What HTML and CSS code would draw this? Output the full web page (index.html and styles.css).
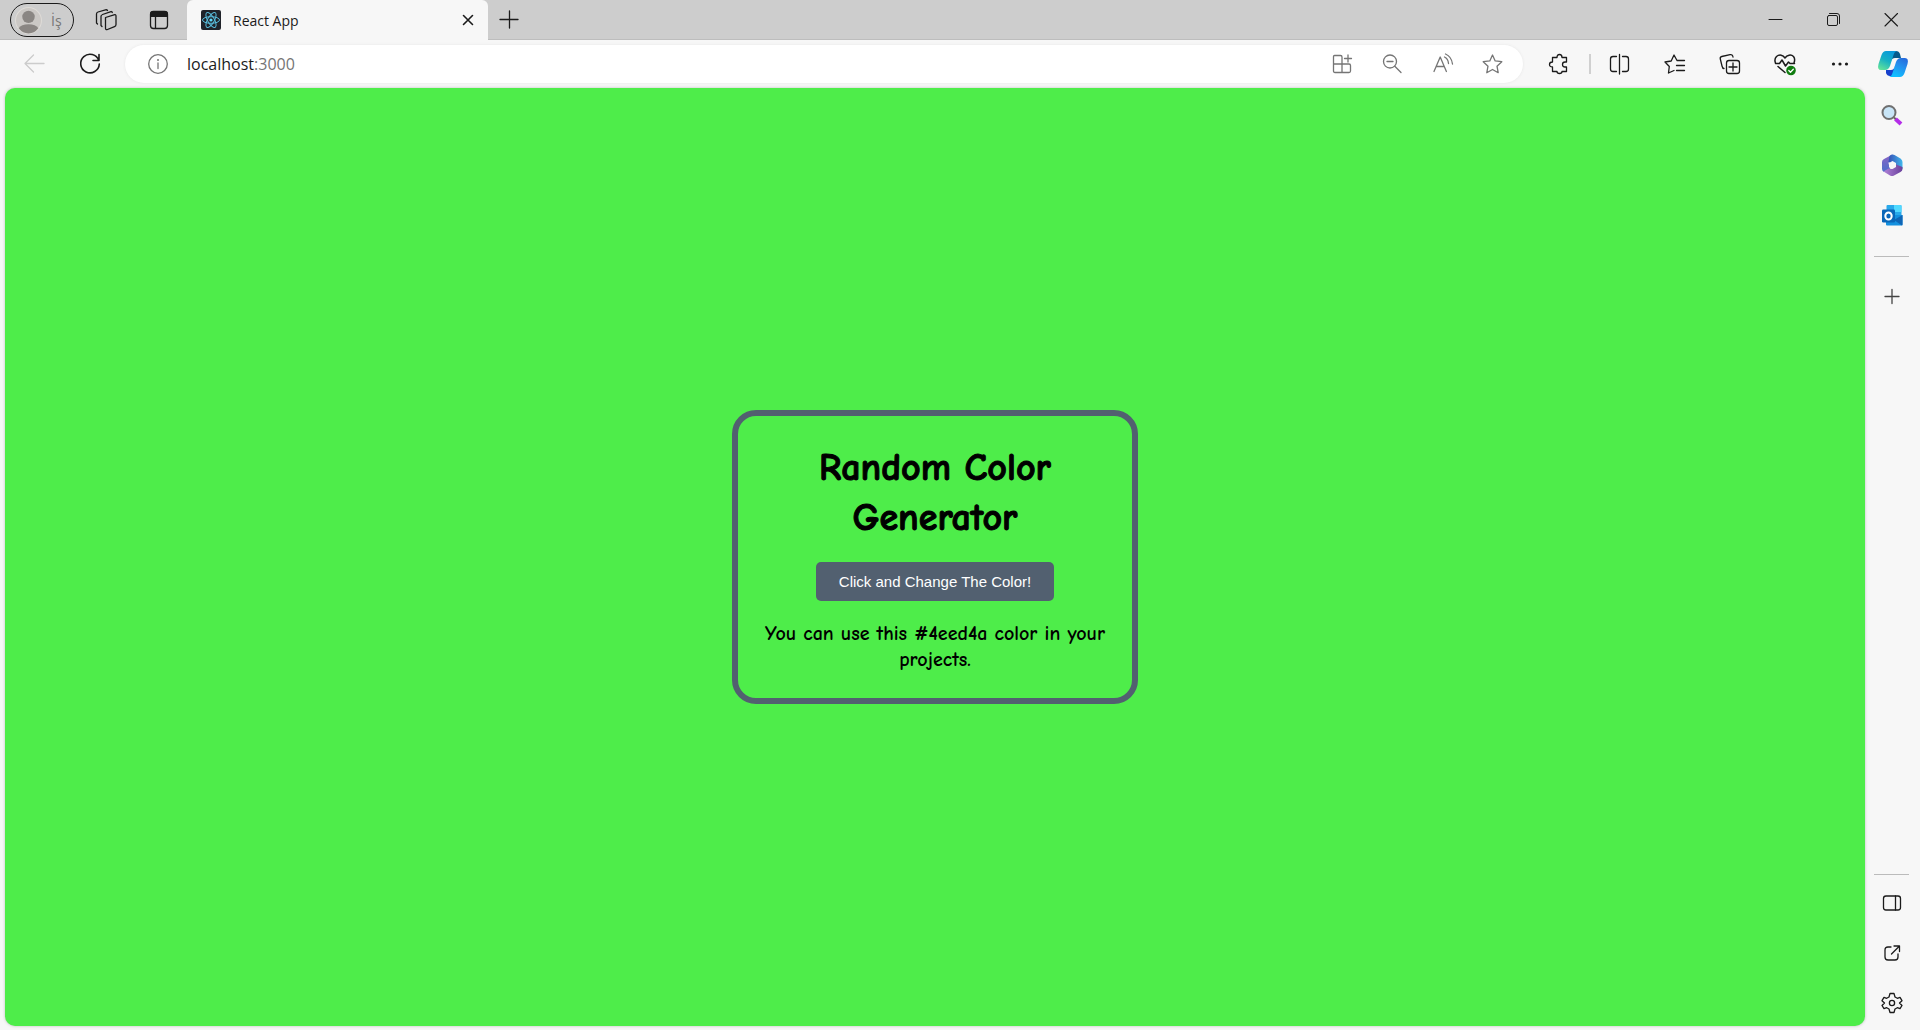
FILE: index.html
```html
<!DOCTYPE html>
<html lang="en">
<head>
<meta charset="utf-8">
<title>React App</title>
<link rel="stylesheet" href="styles.css">
</head>
<body>
<div class="browser">
  <header class="tabbar">
    <button class="profile" type="button">
      <svg class="avatar" viewBox="0 0 26 26"><circle cx="13" cy="13" r="12.500" fill="#cbc8c5" stroke="#dedbd7"/><circle cx="13" cy="9.500" r="6" fill="#8a8683"/><path d="M3.500 20.500Q6 16.500 13 16.500T22.500 20.500Q18.500 25.500 13 25.500T3.500 20.500Z" fill="#8a8683"/></svg>
      <span>İş</span>
    </button>
    <button class="tool tab-tool" type="button" aria-label="Workspaces"><svg viewBox="0 0 24 24"><path d="M11.500 9.500L20 6.800Q22 6.200 22 8V16.500Q22 18 20.500 18.600L13.500 21.500Q11.500 22.200 11.500 20.300ZM8 18.500L7 17.500V8.500Q7 7 8.500 6.500L17 3.500M3.500 16L2.500 15V6Q2.500 4.500 4 4L11.500 1.800M8.500 6.500L17 3.700Q18 3.500 18.300 4.500M11.500 1.800Q13 1.500 13.500 2.500"/></svg></button>
    <button class="tool tab-tool" type="button" aria-label="Tab actions"><svg viewBox="0 0 24 24"><rect x="3.500" y="3.500" width="17" height="17" rx="3"/><path d="M3 9V6Q3 3 6 3H18Q21 3 21 6V9Z" fill="currentColor" stroke="none"/><path d="M8.500 8V20"/></svg></button>
    <div class="tab">
      <svg class="favicon" viewBox="0 0 20 20"><rect width="20" height="20" rx="2" fill="#20232a"/><g fill="none" stroke="#58bddd" stroke-width="1"><ellipse cx="10" cy="10" rx="8.500" ry="3.300"/><ellipse cx="10" cy="10" rx="8.500" ry="3.300" transform="rotate(60 10 10)"/><ellipse cx="10" cy="10" rx="8.500" ry="3.300" transform="rotate(120 10 10)"/></g><circle cx="10" cy="10" r="1.600" fill="#61dafb"/></svg>
      <span class="tab-title">React App</span>
      <button class="tool close-tab" type="button" aria-label="Close tab"><svg viewBox="0 0 24 24"><path d="M7.500 7.500L16.500 16.500M16.500 7.500L7.500 16.500" stroke-width="1.600"/></svg></button>
    </div>
    <button class="tool new-tab" type="button" aria-label="New tab"><svg viewBox="0 0 24 24"><path d="M3 11.500H21M12.500 3V20"/></svg></button>
    <div class="window-controls">
      <button class="tool" type="button" aria-label="Minimize"><svg viewBox="0 0 24 24"><path d="M6 11.500H19" stroke-width="1"/></svg></button>
      <button class="tool" type="button" aria-label="Restore"><svg viewBox="0 0 24 24"><rect x="6.500" y="7.500" width="10" height="10" rx="1.500" stroke-width="1"/><path d="M8.500 5.500H16Q18.500 5.500 18.500 8V15.500" stroke-width="1"/></svg></button>
      <button class="tool" type="button" aria-label="Close"><svg viewBox="0 0 24 24"><path d="M6 5.500L18.500 18M18.500 5.500L6 18" stroke-width="1.100"/></svg></button>
    </div>
  </header>

  <div class="toolbar">
    <button class="tool nav back" type="button" aria-label="Back" disabled><svg viewBox="0 0 24 24"><path d="M21 11.500H2M10.500 3L2 11.500L10.500 20" /></svg></button>
    <button class="tool nav" type="button" aria-label="Refresh"><svg viewBox="0 0 24 24"><path d="M20.800 8.500A9.300 9.300 0 1 0 21.300 12M21 2.500V8.500H15" stroke-width="1.600"/></svg></button>
    <div class="address">
      <button class="tool info" type="button" aria-label="Site information"><svg viewBox="0 0 24 24"><circle cx="12" cy="12" r="9.300"/><path d="M12 11V16.500"/><circle cx="12" cy="8" r="1" fill="currentColor" stroke="none"/></svg></button>
      <label class="url" for="url">localhost<span class="port">:3000</span></label>
      <input id="url" class="url-input" type="text">
      <button class="tool" type="button" aria-label="Apps"><svg viewBox="0 0 24 24"><path d="M4.500 3.500H10.500Q12 3.500 12 5V12H3.500V4.500Q3.500 3.500 4.500 3.500ZM3.500 12H19Q20.500 12 20.500 13.500V19Q20.500 20.500 19 20.500H5Q3.500 20.500 3.500 19ZM12 12V20.500M18 3V10M14.500 6.500H21.500"/></svg></button>
      <button class="tool" type="button" aria-label="Zoom"><svg viewBox="0 0 24 24"><circle cx="10" cy="9.500" r="6.500"/><path d="M14.800 14.300L21 20.500M7 9.500H13"/></svg></button>
      <button class="tool" type="button" aria-label="Read aloud"><svg viewBox="0 0 24 24"><path d="M4 19.500L10.200 5L16.400 19.500M6.300 14.500H14.200M14.500 5Q18 6.500 18.500 11.500M15.500 2Q21.500 4.500 22.500 12"/></svg></button>
      <button class="tool" type="button" aria-label="Favorite"><svg viewBox="0 0 24 24"><path d="M12.500 3L15.200 8.900L21.800 9.700L17 14.200L18.200 20.700L12.500 17.500L6.800 20.700L8 14.200L3.200 9.700L9.800 8.900Z"/></svg></button>
    </div>
    <button class="tool extensions" type="button" aria-label="Extensions"><svg viewBox="0 0 24 24"><path d="M5.500 5.500H10Q10 2.500 12.500 2.500T15 5.500H19.500V10H18Q15.500 10 15.500 12.500T18 15H19.500V19.500H15Q15 21.500 12.500 21.500T10 19.500H5.500V15Q2.500 15 2.500 12.500T5.500 10Z"/></svg></button>
    <span class="divider"></span>
    <button class="tool action" type="button" aria-label="Split screen"><svg viewBox="0 0 24 24"><path d="M9.500 4.500H6Q3.500 4.500 3.500 7V17Q3.500 19.500 6 19.500H9.500M15.500 4.500H19Q21.500 4.500 21.500 7V17Q21.500 19.500 19 19.500H15.500M12.500 2.500V22"/></svg></button>
    <button class="tool action" type="button" aria-label="Favorites"><svg viewBox="0 0 24 24"><path d="M15 8.500L12 3L9.200 9L3 10L7.300 14.500L6.500 21L12 18.500M15 8.500H22.500M14.500 13.500H22.500M14.500 18.500H22.500"/></svg></button>
    <button class="tool action" type="button" aria-label="Collections"><svg viewBox="0 0 24 24"><rect x="9.500" y="8.500" width="13" height="13" rx="2.500"/><path d="M16 11V19M12 15H20M7 16.500Q5.500 16.500 5 14L3.300 7Q2.800 5 4.800 4.500L13 2.700Q15.500 2.200 16 5"/></svg></button>
    <button class="tool action" type="button" aria-label="Browser essentials"><svg viewBox="0 0 24 24"><path d="M3.500 11Q2 7 4.500 4.500C7.500 2 11 3 13 6C15 3 19 2 21.500 4.500Q23.500 7 22 11M3.500 11.500H7.500L10 8L13.500 14L16.500 10L18 11.500H22.500M6 14.500L13 20.500" stroke-width="1.500"/><circle cx="19" cy="18.500" r="4.800" fill="#107c10" stroke="none"/><path d="M16.800 18.500L18.500 20.200L21.300 17.200" stroke="#fff"/></svg></button>
    <button class="tool action" type="button" aria-label="Settings and more"><svg viewBox="0 0 24 24"><g fill="currentColor" stroke="none"><circle cx="6.500" cy="12" r="1.600"/><circle cx="13" cy="12" r="1.600"/><circle cx="19.500" cy="12" r="1.600"/></g></svg></button>
    <button class="tool copilot" type="button" aria-label="Copilot"><svg viewBox="0 0 32 32"><defs><linearGradient id="cl" x1="0.700" y1="0" x2="0.200" y2="1"><stop offset="0" stop-color="#0898dc"/><stop offset="0.500" stop-color="#17b1c4"/><stop offset="1" stop-color="#61e29a"/></linearGradient><linearGradient id="cr" x1="1" y1="0" x2="0.500" y2="1"><stop offset="0" stop-color="#2764d8"/><stop offset="0.500" stop-color="#2490ee"/><stop offset="1" stop-color="#10bdff"/></linearGradient></defs><g stroke="none"><path d="M16 3H19Q22 3 23 6L24 10H18Q15 10 14 13Z" fill="#075b8c"/><path d="M9 22H14Q17 22 18 18L16 28H13Q10 28 9 25Z" fill="#1740cc"/><path d="M9 3H20Q17.500 3.500 16.500 7L13 18Q11.500 22 8 22H4Q0 22 1.500 16L4.500 7Q6 3 9 3Z" fill="url(#cl)"/><path d="M23 29H12Q14.500 28.500 15.500 25L19 14Q20.500 10 24 10H28Q32 10 30.500 16L27.500 25Q26 29 23 29Z" fill="url(#cr)"/></g></svg></button>
  </div>

  <div class="body">
    <main class="page">
      <section class="card">
        <h1>Random Color Generator</h1>
        <button class="change" type="button">Click and Change The Color!</button>
        <p>You can use this #4eed4a color in your projects.</p>
      </section>
    </main>
    <aside class="sidebar">
      <button class="tool" type="button" aria-label="Search"><svg viewBox="0 0 24 24"><path d="M14.500 15L16.500 17" stroke="#666" stroke-width="2"/><path d="M15.500 16L21 21" stroke="#b42de8" stroke-width="4" stroke-linecap="butt"/><circle cx="9" cy="9.500" r="6.500" fill="#c8e5f7" stroke="#707070" stroke-width="2"/></svg></button>
      <button class="tool" type="button" aria-label="Microsoft 365"><svg viewBox="0 0 24 24"><defs><linearGradient id="ma" x1="0" y1="0" x2="0" y2="1"><stop offset="0" stop-color="#8a63c4"/><stop offset="1" stop-color="#4b6fcb"/></linearGradient><linearGradient id="mb"><stop offset="0" stop-color="#3650b5"/><stop offset="1" stop-color="#41b7ed"/></linearGradient><linearGradient id="mc"><stop offset="0" stop-color="#b083d8"/><stop offset="1" stop-color="#69409b"/></linearGradient></defs><g stroke="none"><path d="M12.500 1.500L4 6Q2 7 2 9V16Q2 18 4 19L10 16L8.500 10Z" fill="url(#ma)"/><path d="M9.500 3Q12 0.800 14.500 2L20.500 5.500Q22.500 7 22.500 9V16L15 12L8.500 9Z" fill="url(#mb)"/><path d="M3.500 18.500L8.500 15.500L12 16L16 11.500L22.500 14V16Q22.500 18 20.500 19L14 22.500Q12 23.500 10 22.500Z" fill="url(#mc)"/><path d="M12.500 8L16 10V14L12.500 16L9 14V10Z" fill="#f7f7f7"/></g></svg></button>
      <button class="tool" type="button" aria-label="Outlook"><svg viewBox="0 0 24 24"><g stroke="none"><rect x="6.500" y="2" width="15" height="17" rx="1" fill="#28a8ea"/><path d="M14 2H20.500Q21.500 2 21.500 3V9H14Z" fill="#50d9ff"/><path d="M7 9H14V14H7Z" fill="#0364b8"/><path d="M6 12H22.500V21.500Q22.500 22.500 21.500 22.500H7Q6 22.500 6 21.500Z" fill="#1490df"/><path d="M22.500 12L14 17L22 22.500Q22.500 22 22.500 21.500Z" fill="#0f65b5"/><rect x="2" y="6.500" width="13" height="13" rx="1.200" fill="#0a67b9"/></g><ellipse cx="8.500" cy="13" rx="3.200" ry="3.500" stroke="#fff" stroke-width="2"/></svg></button>
      <hr>
      <button class="tool" type="button" aria-label="Customize"><svg viewBox="0 0 24 24"><path d="M5 11.500H19M12 4.500V18.500" stroke="#444"/></svg></button>
      <div class="sidebar-end">
        <hr>
        <button class="tool" type="button" aria-label="Hide sidebar"><svg viewBox="0 0 24 24"><rect x="3.500" y="5" width="17" height="14" rx="2.500"/><path d="M15.500 5V19"/></svg></button>
        <button class="tool" type="button" aria-label="Open in window"><svg viewBox="0 0 24 24"><path d="M11 6H8Q5 6 5 9V16Q5 19 8 19H15Q18 19 18 16V13M14 5H19.500V10.500M19.500 5L11.500 13"/></svg></button>
        <button class="tool" type="button" aria-label="Settings"><svg viewBox="0 0 24 24"><path d="M10 2.500H14L15 6L17.300 7.300L20 6.300L22 9.700L19.500 12L22 14.500L20 17.700L17.300 16.700L15 18L14 21.500H10L9 18L6.700 16.700L4 17.700L2 14.500L4.500 12L2 9.700L4 6.300L6.700 7.300L9 6Z"/><circle cx="12" cy="12" r="2.600"/></svg></button>
      </div>
    </aside>
  </div>
</div>
</body>
</html>
```
FILE: styles.css
```css
* { box-sizing: border-box; }

body {
  margin: 0;
  background: #f7f7f7;
  color: #1b1b1b;
  font-family: "Segoe UI", "Open Sans", sans-serif;
}

button {
  border: 0;
  padding: 0;
  background: none;
  color: inherit;
  font: inherit;
}

.browser {
  display: flex;
  flex-direction: column;
  min-height: 100vh;
}

.tool {
  display: flex;
  align-items: center;
  justify-content: center;
  flex: none;
}

.tool svg {
  width: 24px;
  height: 24px;
  fill: none;
  stroke: currentColor;
  stroke-width: 1.3;
  stroke-linecap: round;
  stroke-linejoin: round;
}

/* Tab strip */
.tabbar {
  display: flex;
  align-items: center;
  height: 40px;
  padding-left: 10px;
  background: #cdcdcd;
  box-shadow: inset 0 -1px #bdbdbd;
}

.profile {
  display: flex;
  align-items: center;
  gap: 9px;
  width: 64px;
  height: 34px;
  padding-left: 4px;
  border: 1px solid #1b1b1b;
  border-radius: 17px;
  color: #777;
  font-size: 14px;
}

.avatar { width: 27px; height: 27px; }

.tab-tool { width: 53px; }
.tab-tool:nth-child(2) { margin-left: 5px; }

.tab {
  display: flex;
  align-items: center;
  align-self: stretch;
  width: 301px;
  margin-left: 2px;
  padding: 0 8px 0 14px;
  border-radius: 6px 6px 0 0;
  background: #f7f7f7;
}

.favicon { width: 20px; height: 20px; }

.tab-title {
  flex: 1;
  margin-left: 12px;
  font-size: 14px;
}

.close-tab { width: 24px; }
.new-tab { width: 41px; }

.window-controls {
  display: flex;
  margin-left: auto;
}

.window-controls .tool { width: 58px; }

/* Toolbar */
.toolbar {
  display: flex;
  align-items: center;
  height: 48px;
  padding-left: 7px;
}

.nav { width: 55px; }
.back { color: #ccc; }

.address {
  display: flex;
  flex: 1;
  align-items: center;
  height: 38px;
  margin-left: 8px;
  padding: 0 6px 0 8px;
  border-radius: 19px;
  background: #fff;
  color: #757575;
  box-shadow: 0 0 3px #e6e6e6;
}

.address .tool { width: 50px; }

.url {
  margin-left: 4px;
  color: #1b1b1b;
  font-size: 16px;
}

.port { color: #757575; }

.url-input {
  flex: 1;
  min-width: 0;
  border: 0;
  outline: 0;
  background: transparent;
  font: inherit;
}

.extensions { width: 66px; padding-left: 6px; }

.divider {
  width: 2px;
  height: 20px;
  background: #d0d0d0;
}

.action { width: 55px; }
.copilot { width: 54px; }
.copilot svg { width: 32px; height: 32px; }

/* Page and side panel */
.body {
  display: flex;
  flex: 1;
}

.page {
  display: flex;
  flex: 1;
  align-items: center;
  justify-content: center;
  margin: 0 0 4px 5px;
  border-radius: 10px;
  background: #4eed4a;
  box-shadow: 0 0 3px #bbb;
}

.card {
  width: 406px;
  padding: 27px 20px 25px;
  border: 6px solid #526070;
  border-radius: 24px;
  color: #000;
  font-family: "Comic Sans MS", "Comic Neue", "Open Sans", sans-serif;
  font-weight: 700;
  text-align: center;
}

.card h1 {
  margin: 0 40px 19px;
  font-size: 38px;
  line-height: 50px;
  -webkit-text-stroke: 1px #000;
}

.change {
  height: 39px;
  padding: 0 23px;
  border-radius: 5px;
  background: #526070;
  color: #fff;
  font-family: Arial, "Liberation Sans", sans-serif;
  font-size: 15px;
  font-weight: 400;
}

.card p {
  margin: 20px 0 0;
  font-size: 20px;
  line-height: 26px;
}

.sidebar {
  display: flex;
  flex-direction: column;
  align-items: center;
  width: 55px;
  padding: 2px 2px 2px 0;
}

.sidebar .tool { width: 48px; height: 50px; }

.sidebar hr {
  width: 35px;
  margin: 16px 0 15px;
  border: 0;
  border-top: 1px solid #bbb;
}

.sidebar-end { margin-top: auto; }
.sidebar-end hr { margin: 0 auto 3px; }
```
